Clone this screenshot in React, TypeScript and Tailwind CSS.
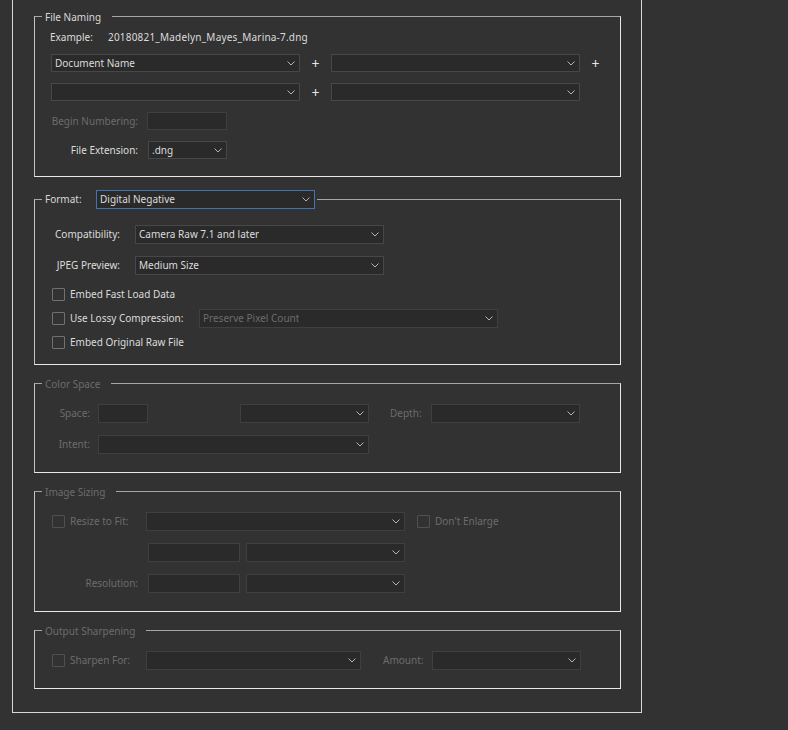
import React from 'react';

type BoxProps = {
  className: string;
  value?: string;
  disabled?: boolean;
  focus?: boolean;
  chevron?: boolean;
};

function Chevron() {
  return (
    <svg className="w-[8px] h-[5px] text-[#b4b4b4] shrink-0" viewBox="0 0 8 5" fill="none">
      <polyline points="0.5,0.5 4,4 7.5,0.5" stroke="currentColor" strokeWidth="1" />
    </svg>
  );
}

function Box({ className, value, disabled, focus, chevron = true }: BoxProps) {
  const border = focus ? 'border-[#3f74b6]' : disabled ? 'border-[#3f3f3f]' : 'border-[#474747]';
  const text = disabled ? 'text-[#6c6c6c]' : 'text-[#dcdcdc]';
  return (
    <div className={`flex items-center justify-between border ${border} bg-[#2a2a2a] pl-[3px] pr-[4px] shrink-0 ${className}`}>
      <span className={`truncate ${text}`}>{value}</span>
      {chevron && <Chevron />}
    </div>
  );
}

function Check({ disabled }: { disabled?: boolean }) {
  return (
    <span
      className={`block w-[13px] h-[13px] shrink-0 border rounded-[1px] ${disabled ? 'border-[#505050]' : 'border-[#707070]'}`}
    />
  );
}

function Section({
  legend,
  className,
  children,
}: {
  legend: React.ReactNode;
  className: string;
  children: React.ReactNode;
}) {
  return (
    <fieldset
      className={`w-[587px] border border-t-[#a6a6a6] border-l-[#c4c4c4] border-r-[#e8e8e8] border-b-[#e8e8e8] ${className}`}
    >
      {legend}
      {children}
    </fieldset>
  );
}

function TextLegend({ text, disabled }: { text: string; disabled?: boolean }) {
  return (
    <legend
      className={`ml-[7px] pl-[3px] pr-[11px] pt-[2px] leading-[13px] ${disabled ? 'text-[#6c6c6c]' : 'text-[#d8d8d8]'}`}
    >
      {text}
    </legend>
  );
}

export default function App() {
  const dim = 'text-[#6c6c6c]';
  return (
    <div className="min-h-screen bg-[#323232] text-[10px] leading-[15px] text-[#dcdcdc] font-['Noto_Sans',sans-serif]">
      <div className="ml-[12px] w-[630px] border-x border-b border-[#d6d6d6] pl-[21px] pt-[9px] pb-[23px]">
        {/* File Naming */}
        <Section legend={<TextLegend text="File Naming" />} className="pb-[17px]">
          <div className="flex items-center h-[15px] mt-[6px] pl-[15px]">
            <span className="w-[58px]">Example:</span>
            <span className="tracking-[0.2px]">20180821_Madelyn_Mayes_Marina-7.dng</span>
          </div>
          <div className="flex items-center mt-[9px] pl-[16px]">
            <Box className="w-[249px] h-[18px]" value="Document Name" />
            <span className="w-[31px] text-center text-[14px] text-[#e6e6e6]">+</span>
            <Box className="w-[249px] h-[18px]" />
            <span className="w-[31px] text-center text-[14px] text-[#e6e6e6]">+</span>
          </div>
          <div className="flex items-center mt-[11px] pl-[16px]">
            <Box className="w-[249px] h-[18px]" />
            <span className="w-[31px] text-center text-[14px] text-[#e6e6e6]">+</span>
            <Box className="w-[249px] h-[18px]" />
          </div>
          <div className="flex items-center mt-[11px]">
            <span className={`w-[103px] text-right ${dim}`}>Begin Numbering:</span>
            <Box className="ml-[9px] w-[80px] h-[18px]" disabled chevron={false} />
          </div>
          <div className="flex items-center mt-[11px]">
            <span className="w-[103px] text-right">File Extension:</span>
            <Box className="ml-[10px] w-[79px] h-[18px]" value=".dng" />
          </div>
        </Section>

        {/* Format */}
        <Section
          className="mt-[13px] pb-[10px]"
          legend={
            <legend className="ml-[7px] pl-[3px] pr-[2px] flex items-center text-[#d8d8d8]">
              <span className="w-[51px]">Format:</span>
              <Box className="w-[219px] h-[19px]" value="Digital Negative" focus />
            </legend>
          }
        >
          <div className="flex items-center mt-[16px]">
            <span className="w-[85px] text-right">Compatibility:</span>
            <Box className="ml-[15px] w-[249px] h-[19px]" value="Camera Raw 7.1 and later" />
          </div>
          <div className="flex items-center mt-[12px]">
            <span className="w-[85px] text-right">JPEG Preview:</span>
            <Box className="ml-[15px] w-[249px] h-[19px]" value="Medium Size" />
          </div>
          <div className="mt-[7px] pl-[17px]">
            <div className="flex items-center h-[24px] gap-[5px]">
              <Check />
              <span>Embed Fast Load Data</span>
            </div>
            <div className="flex items-center h-[24px]">
              <Check />
              <span className="ml-[5px] w-[129px]">Use Lossy Compression:</span>
              <Box className="w-[299px] h-[19px]" value="Preserve Pixel Count" disabled />
            </div>
            <div className="flex items-center h-[24px] gap-[5px]">
              <Check />
              <span>Embed Original Raw File</span>
            </div>
          </div>
        </Section>

        {/* Color Space */}
        <Section className="mt-[11px] pb-[18px]" legend={<TextLegend text="Color Space" disabled />}>
          <div className={`flex items-center mt-[13px] ${dim}`}>
            <span className="w-[55px] text-right">Space:</span>
            <Box className="ml-[8px] w-[50px] h-[19px]" disabled chevron={false} />
            <Box className="ml-[92px] w-[129px] h-[19px]" disabled />
            <span className="ml-[21px] w-[41px]">Depth:</span>
            <Box className="w-[149px] h-[19px]" disabled />
          </div>
          <div className={`flex items-center mt-[12px] ${dim}`}>
            <span className="w-[55px] text-right">Intent:</span>
            <Box className="ml-[8px] w-[271px] h-[19px]" disabled />
          </div>
        </Section>

        {/* Image Sizing */}
        <Section className="mt-[11px] pb-[18px]" legend={<TextLegend text="Image Sizing" disabled />}>
          <div className={`flex items-center mt-[13px] pl-[17px] ${dim}`}>
            <Check disabled />
            <span className="ml-[5px] w-[76px]">Resize to Fit:</span>
            <Box className="w-[259px] h-[19px]" disabled />
            <span className="ml-[12px]" />
            <Check disabled />
            <span className="ml-[5px]">Don&apos;t Enlarge</span>
          </div>
          <div className="flex items-center mt-[12px] pl-[113px]">
            <Box className="w-[92px] h-[19px]" disabled chevron={false} />
            <Box className="ml-[6px] w-[159px] h-[19px]" disabled />
          </div>
          <div className={`flex items-center mt-[12px] ${dim}`}>
            <span className="w-[103px] text-right">Resolution:</span>
            <Box className="ml-[10px] w-[92px] h-[19px]" disabled chevron={false} />
            <Box className="ml-[6px] w-[159px] h-[19px]" disabled />
          </div>
        </Section>

        {/* Output Sharpening */}
        <Section className="mt-[11px] pb-[18px]" legend={<TextLegend text="Output Sharpening" disabled />}>
          <div className={`flex items-center mt-[13px] pl-[17px] ${dim}`}>
            <Check disabled />
            <span className="ml-[5px] w-[76px]">Sharpen For:</span>
            <Box className="w-[215px] h-[19px]" disabled />
            <span className="ml-[22px] w-[49px]">Amount:</span>
            <Box className="w-[149px] h-[19px]" disabled />
          </div>
        </Section>
      </div>
    </div>
  );
}
